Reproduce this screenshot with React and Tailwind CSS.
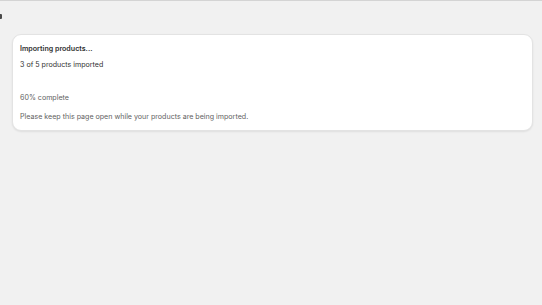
import React from 'react';

const ImportProgress = ({ done, total }) => {
  const pct = Math.round((done / total) * 100);
  return (
    <div className="ml-[12px] mr-[9px] mt-[20px] bg-white rounded-[9px] border border-[#e3e3e3] shadow-[0_1px_2px_rgba(0,0,0,0.08)] px-[7px] pt-[9px] pb-[8px]">
      <div className="text-[7.1px] leading-[10px] font-semibold text-[#303030]">Importing products...</div>
      <div className="mt-[6px] text-[7.1px] leading-[10px] text-[#303030]">
        {done} of {total} products imported
      </div>
      {/* progress track (empty in screenshot) */}
      <div className="h-[23px]" />
      <div className="text-[7.1px] leading-[10px] text-[#616161]">{pct}% complete</div>
      <div className="mt-[9px] text-[7.1px] leading-[10px] text-[#616161]">
        Please keep this page open while your products are being imported.
      </div>
    </div>
  );
}

export default function App() {
  return (
    <div
      className="w-[542px] h-[305px] bg-[#f1f1f1] border-t border-[#d4d4d4] relative overflow-hidden"
      style={{ fontFamily: 'Inter, "Liberation Sans", sans-serif' }}
    >
      <div className="absolute left-0 top-[13px] w-[2px] h-[5px] bg-[#4a4a4a] rounded-r-[1px]" />
      <div className="pt-[13px]">
        <ImportProgress done={3} total={5} />
      </div>
    </div>
  );
}
